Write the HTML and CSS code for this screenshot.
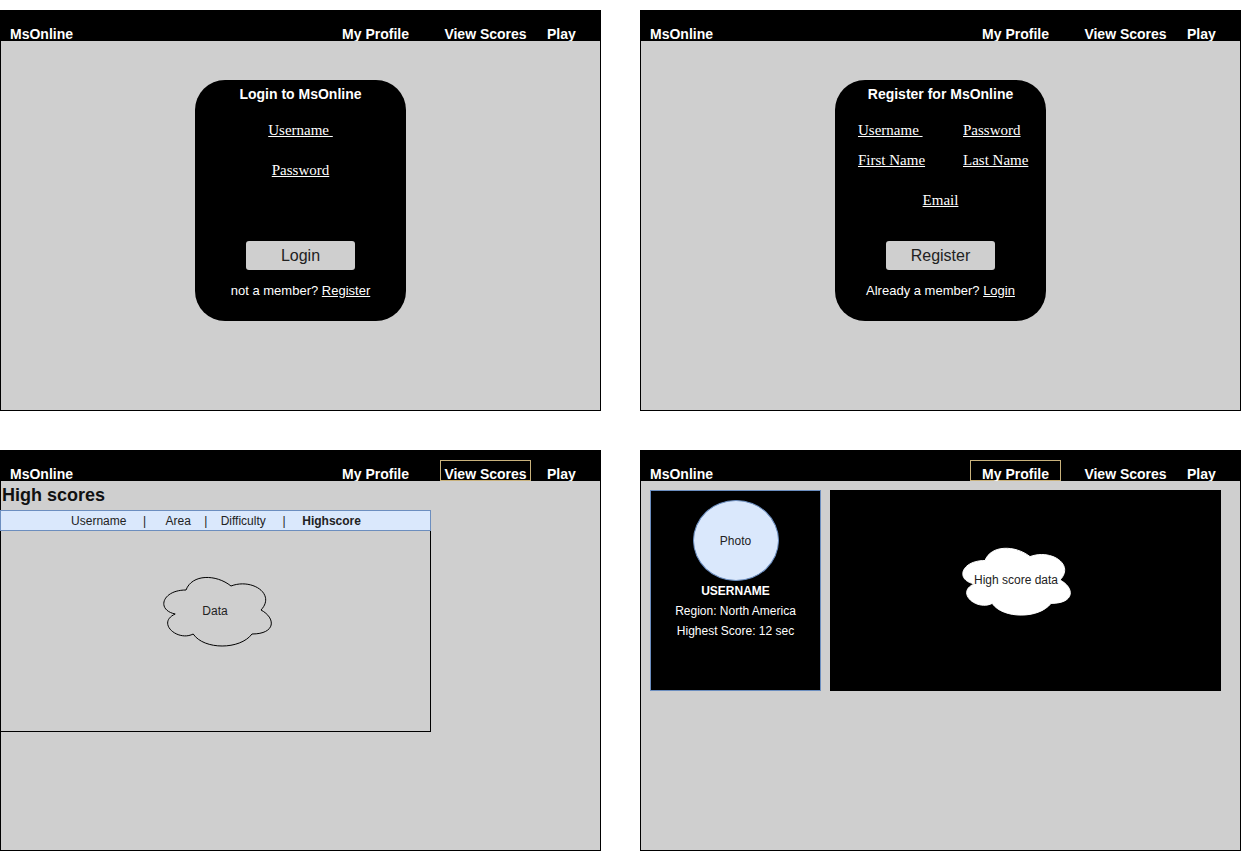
FILE: index.html
```html
<!DOCTYPE html>
<html>
<head>
<meta charset="utf-8">
<title>MsOnline wireframes</title>
<link rel="stylesheet" href="styles.css">
</head>
<body>
<div class="board">

  <section class="panel">
    <header class="topbar">
      <div class="logo">MsOnline</div>
      <div class="nav-item">My Profile</div>
      <div class="nav-item gap">View Scores</div>
      <div class="nav-play">Play</div>
    </header>
    <div class="body body-center">
      <div class="card">
        <div class="card-title">Login to MsOnline</div>
        <div class="field first">Username&nbsp;</div>
        <div class="field second">Password</div>
        <div class="btn">Login</div>
        <div class="card-foot">not a member? <u>Register</u></div>
      </div>
    </div>
  </section>

  <section class="panel">
    <header class="topbar">
      <div class="logo">MsOnline</div>
      <div class="nav-item">My Profile</div>
      <div class="nav-item gap">View Scores</div>
      <div class="nav-play">Play</div>
    </header>
    <div class="body body-center">
      <div class="card">
        <div class="card-title">Register for MsOnline</div>
        <div class="reg-grid">
          <div class="field">Username&nbsp;</div>
          <div class="field">Password</div>
          <div class="field">First Name</div>
          <div class="field">Last Name</div>
        </div>
        <div class="field email">Email</div>
        <div class="btn">Register</div>
        <div class="card-foot">Already a member? <u>Login</u></div>
      </div>
    </div>
  </section>

  <section class="panel">
    <header class="topbar">
      <div class="logo">MsOnline</div>
      <div class="nav-item">My Profile</div>
      <div class="nav-item gap active">View Scores</div>
      <div class="nav-play">Play</div>
    </header>
    <div class="body">
      <h2 class="page-title">High scores</h2>
      <div class="score-table">
        <div class="score-head">Username     |      Area    |    Difficulty     |     <b>Highscore</b></div>
        <div class="score-body">
          <div class="cloud cloud-data">
            <svg width="120" height="80" viewBox="0 0 120 80">
              <path d="M 30 20 C 6 20 0 40 19.2 44 C 0 52.8 21.6 72 37.2 64 C 48 80 84 80 96 64 C 120 64 120 48 105 40 C 120 24 96 8 75 16 C 60 4 36 4 30 20 Z" fill="none" stroke="#000" stroke-width="1"/>
            </svg>
            <span class="cloud-label">Data</span>
          </div>
        </div>
      </div>
    </div>
  </section>

  <section class="panel">
    <header class="topbar">
      <div class="logo">MsOnline</div>
      <div class="nav-item active">My Profile</div>
      <div class="nav-item gap">View Scores</div>
      <div class="nav-play">Play</div>
    </header>
    <div class="body body-profile">
      <div class="profile-card">
        <div class="photo">Photo</div>
        <div class="p-line p-name">USERNAME</div>
        <div class="p-line">Region: North America</div>
        <div class="p-line">Highest Score: 12 sec</div>
      </div>
      <div class="score-data">
        <div class="cloud cloud-white">
          <svg width="120" height="78" viewBox="0 0 120 80" preserveAspectRatio="none">
            <path d="M 30 20 C 6 20 0 40 19.2 44 C 0 52.8 21.6 72 37.2 64 C 48 80 84 80 96 64 C 120 64 120 48 105 40 C 120 24 96 8 75 16 C 60 4 36 4 30 20 Z" fill="#fff" stroke="#fff" stroke-width="1"/>
          </svg>
          <span class="cloud-label">High score data</span>
        </div>
      </div>
    </div>
  </section>

</div>
</body>
</html>
```

FILE: styles.css
```css
html, body {
  margin: 0;
  padding: 0;
  background: #ffffff;
}

body {
  font-family: "Liberation Sans", Arial, sans-serif;
}

.board {
  display: grid;
  grid-template-columns: 601px 601px;
  grid-template-rows: 401px 401px;
  column-gap: 39px;
  row-gap: 39px;
  padding-top: 10px;
}

.panel {
  display: flex;
  flex-direction: column;
  width: 601px;
  height: 401px;
}

.topbar {
  height: 31px;
  background: #000;
  color: #fff;
  display: flex;
  align-items: flex-end;
  font-size: 14px;
  font-weight: bold;
  flex: none;
}

.logo {
  width: 330px;
  box-sizing: border-box;
  padding-left: 10px;
  line-height: 16px;
  margin-bottom: -1px;
}

.nav-item {
  width: 91px;
  height: 21px;
  box-sizing: border-box;
  border: 1px solid transparent;
  padding-top: 6px;
  line-height: 14px;
  text-align: center;
}

.nav-item.gap {
  margin-left: 19px;
}

.nav-item.active {
  border-color: #c9b27c;
}

.nav-play {
  margin-left: 16px;
  line-height: 16px;
  margin-bottom: -1px;
}

.body {
  flex: 1;
  background: #cfcfcf;
  border: 1px solid #000;
  border-top: none;
  display: flex;
  flex-direction: column;
  position: relative;
}

.body-center {
  align-items: center;
  padding-top: 39px;
}

/* Login / register card */
.card {
  width: 211px;
  height: 241px;
  background: #000;
  border-radius: 30px;
  color: #fff;
  display: flex;
  flex-direction: column;
  align-items: center;
  box-sizing: border-box;
}

.card-title {
  margin-top: 6px;
  font-size: 14px;
  font-weight: bold;
  line-height: 16px;
}

.field {
  font-family: "Liberation Serif", "Times New Roman", serif;
  font-size: 15px;
  line-height: 17px;
  text-decoration: underline;
  color: #fff;
}

.field.first {
  margin-top: 20px;
}

.field.second {
  margin-top: 23px;
}

.reg-grid {
  align-self: stretch;
  margin-top: 20px;
  padding-left: 23px;
  display: grid;
  grid-template-columns: 105px auto;
  row-gap: 13px;
}

.field.email {
  margin-top: 23px;
}

.btn {
  margin-top: auto;
  width: 109px;
  height: 29px;
  background: #cfcfcf;
  border-radius: 3px;
  color: #222;
  font-size: 16px;
  line-height: 29px;
  text-align: center;
}

.card-foot {
  margin-top: 13px;
  margin-bottom: 22px;
  font-size: 13px;
  line-height: 16px;
  color: #fff;
}

/* High scores */
.page-title {
  margin: 0;
  padding: 4px 0 0 1px;
  font-size: 18px;
  line-height: 21px;
  font-weight: bold;
  color: #111;
  margin-bottom: 4px;
}

.score-table {
  width: 431px;
  margin-left: -1px;
}

.score-head {
  height: 21px;
  box-sizing: border-box;
  background: #dae8fc;
  border: 1px solid #6c8ebf;
  font-size: 12px;
  line-height: 19px;
  padding-top: 1px;
  color: #222;
  text-align: center;
  white-space: pre;
  padding-left: 1px;
}

.score-body {
  height: 201px;
  box-sizing: border-box;
  border: 1px solid #000;
  border-top: none;
  display: flex;
  justify-content: center;
  padding-top: 39px;
}

.cloud {
  position: relative;
  width: 120px;
  height: 80px;
}

.cloud svg {
  display: block;
}

.cloud-label {
  position: absolute;
  left: 0;
  right: 0;
  top: 0;
  bottom: 0;
  display: flex;
  align-items: center;
  justify-content: center;
  font-size: 12px;
  color: #222;
}

.cloud-data {
  margin-left: 1px;
}

.cloud-data .cloud-label {
  padding-right: 2px;
  padding-top: 2px;
}

/* Profile */
.body-profile {
  flex-direction: row;
  align-items: flex-start;
  padding: 9px 0 0 9px;
  gap: 9px;
}

.profile-card {
  width: 171px;
  height: 201px;
  box-sizing: border-box;
  background: #000;
  border: 1px solid #6c8ebf;
  display: flex;
  flex-direction: column;
  align-items: center;
  padding-top: 9px;
  color: #fff;
}

.photo {
  width: 86px;
  height: 81px;
  box-sizing: border-box;
  border-radius: 50%;
  background: #dae8fc;
  border: 1px solid #6c8ebf;
  color: #222;
  font-size: 12px;
  display: flex;
  align-items: center;
  justify-content: center;
}

.p-line {
  font-size: 12px;
  line-height: 20px;
}

.p-name {
  font-weight: bold;
}

.score-data {
  width: 391px;
  height: 201px;
  background: #000;
  display: flex;
  justify-content: center;
  padding-top: 51px;
  box-sizing: border-box;
}

.cloud-white {
  margin-right: 21px;
  height: 78px;
}

.cloud-white .cloud-label {
  padding-left: 2px;
}
```
